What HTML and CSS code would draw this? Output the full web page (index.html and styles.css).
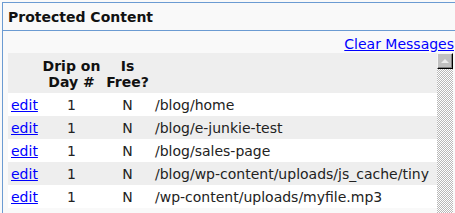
FILE: index.html
```html
<!DOCTYPE html>
<html>
<head>
<meta charset="utf-8">
<link rel="stylesheet" href="styles.css">
</head>
<body>
<div class="panel">
  <div class="panel-head">Protected Content</div>
  <div class="panel-body">
    <div class="actions"><a href="#">Clear Messages</a></div>
    <div class="scroller">
      <div class="viewport">
        <table class="grid">
          <colgroup>
            <col class="c-edit"><col class="c-drip"><col class="c-free"><col class="c-path">
          </colgroup>
          <thead>
            <tr><th></th><th>Drip on<br>Day #</th><th>Is<br>Free?</th><th></th></tr>
          </thead>
          <tbody>
            <tr><td><a href="#">edit</a></td><td class="ctr">1</td><td class="ctr">N</td><td class="path">/blog/home</td></tr>
            <tr class="alt"><td><a href="#">edit</a></td><td class="ctr">1</td><td class="ctr">N</td><td class="path">/blog/e-junkie-test</td></tr>
            <tr><td><a href="#">edit</a></td><td class="ctr">1</td><td class="ctr">N</td><td class="path">/blog/sales-page</td></tr>
            <tr class="alt"><td><a href="#">edit</a></td><td class="ctr">1</td><td class="ctr">N</td><td class="path">/blog/wp-content/uploads/js_cache/tiny</td></tr>
            <tr><td><a href="#">edit</a></td><td class="ctr">1</td><td class="ctr">N</td><td class="path">/wp-content/uploads/myfile.mp3</td></tr>
          </tbody>
        </table>
      </div>
      <div class="vscroll">
        <div class="vbtn"><span class="arrow"></span></div>
        <div class="vtrack"></div>
      </div>
    </div>
  </div>
</div>
</body>
</html>
```
FILE: styles.css
```css
html, body {
  margin: 0;
  padding: 0;
  background: #f9f9f9;
  overflow: hidden;
}
body {
  font-family: "DejaVu Sans", Verdana, sans-serif;
  font-size: 14px;
  line-height: 16px;
  color: #222;
}
a {
  color: #0000ff;
  text-decoration: underline;
}
.panel {
  margin: 2px 0 0 2px;
  border-top: 1px solid #6b9bd2;
  border-left: 1px solid #6b9bd2;
}
.panel-head {
  font-weight: bold;
  padding: 6px 0 5px 5px;
  border-bottom: 1px solid #6b9bd2;
  color: #111;
}
.actions {
  text-align: right;
  padding: 5px 1px 1px 0;
}
.scroller {
  display: flex;
  margin-left: 5px;
  height: 160px;
}
.viewport {
  width: 429px;
  overflow: hidden;
}
.grid {
  table-layout: fixed;
  width: 429px;
  border-collapse: collapse;
  border-spacing: 0;
}
.c-edit { width: 32px; }
.c-drip { width: 63px; }
.c-free { width: 49px; }
.c-path { width: 285px; }
.grid th {
  background: #eeeeee;
  font-weight: bold;
  text-align: center;
  padding: 5px 0 3px 0;
  color: #111;
}
.grid td {
  padding: 4px 0 3px 3px;
  white-space: nowrap;
  overflow: hidden;
  background: #ffffff;
}
.grid tr.alt td {
  background: #eeeeee;
}
.grid td.ctr {
  text-align: center;
  padding-left: 0;
}
.vscroll {
  width: 16px;
  display: flex;
  flex-direction: column;
}
.vbtn {
  box-sizing: border-box;
  width: 16px;
  height: 16px;
  background: #c0c0c0;
  border-top: 1px solid #f4f4f4;
  border-left: 1px solid #f4f4f4;
  border-right: 1px solid #000;
  border-bottom: 1px solid #000;
  box-shadow: inset -1px -1px 0 #808080;
  display: flex;
  align-items: center;
  justify-content: center;
}
.arrow {
  width: 0;
  height: 0;
  border-left: 4px solid transparent;
  border-right: 4px solid transparent;
  border-bottom: 4px solid #ececec;
  margin-top: -1px;
}
.vtrack {
  flex: 1;
  background: repeating-conic-gradient(#b8b8b8 0 25%, #ffffff 0 50%) 0 0 / 2px 2px;
}
```
